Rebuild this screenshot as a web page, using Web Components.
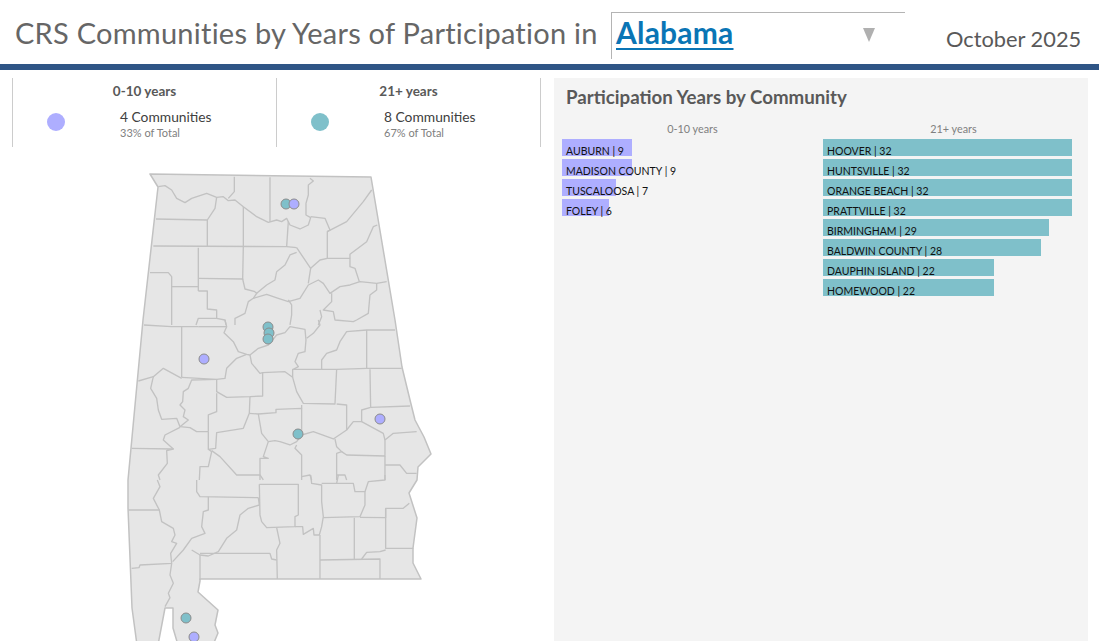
<!DOCTYPE html>
<html>
<head>
<meta charset="utf-8">
<style>
    html, body { margin: 0; height: 100%; overflow: hidden; background: #fff; }
    body { font-family: "Lato", "Liberation Sans", sans-serif; }
</style>
</head>
<body>
<crs-dashboard></crs-dashboard>

<script>
const BLUE = "#aeaeff";
const TEAL = "#7fc0ca";

class CrsHeader extends HTMLElement {
    constructor() {
        super();
        this.attachShadow({mode: "open"});
    }
    connectedCallback() {
        this.shadowRoot.innerHTML = `
        <style>
            :host { display: flex; align-items: flex-start; box-sizing: border-box; border-bottom: 6px solid #2f5586; height: 70px; }
            .title { font-size: 29px; color: #666; margin: 15px 0 0 15px; white-space: nowrap; width: 596px; letter-spacing: 0.25px; }
            .picker { width: 294px; height: 47px; margin-top: 12px; box-sizing: border-box; border-top: 1px solid #b4b4b4; border-left: 1px solid #b4b4b4; display: flex; justify-content: space-between; padding: 1px 30px 0 4px; }
            .state { font-size: 30px; font-weight: 700; color: #0a75b5; text-decoration: underline; text-decoration-thickness: 2px; text-underline-offset: 4px; letter-spacing: 0.2px; }
            .arrow { width: 0; height: 0; margin-top: 14px; border-left: 6.5px solid transparent; border-right: 6.5px solid transparent; border-top: 14px solid #b0b0b0; }
            .date { font-size: 21.8px; color: #595959; margin: 25px 0 0 41px; white-space: nowrap; }
        </style>
        <div class="title">CRS Communities by Years of Participation in</div>
        <div class="picker"><span class="state">Alabama</span><span class="arrow"></span></div>
        <div class="date">October 2025</div>`;
    }
}

class CrsKpi extends HTMLElement {
    constructor() {
        super();
        this.attachShadow({mode: "open"});
    }
    connectedCallback() {
        this.shadowRoot.innerHTML = `
        <style>
            :host { display: block; width: 264px; height: 69px; box-sizing: border-box; border-left: 1px solid #ccc; }
            .head { font-size: 13.5px; font-weight: 700; color: #595959; text-align: center; margin-top: 5px; height: 26px; }
            .row { display: flex; align-items: flex-start; }
            .dot { width: 18px; height: 18px; border-radius: 50%; background: var(--dot); margin: 4px 0 0 34px; }
            .txt { margin-left: 55px; }
            .big { font-size: 13.8px; color: #404040; line-height: 16px; }
            .small { font-size: 11px; color: #808080; line-height: 13px; margin-top: 1px; }
        </style>
        <div class="head">${this.getAttribute("label")}</div>
        <div class="row">
            <span class="dot"></span>
            <div class="txt">
                <div class="big"><slot name="big"></slot></div>
                <div class="small"><slot name="small"></slot></div>
            </div>
        </div>`;
    }
}

class CrsMap extends HTMLElement {
    constructor() {
        super();
        this.attachShadow({mode: "open"});
    }
    connectedCallback() {
        // traced county lines, three blocks in reference crop coordinates
        const north = [
            "115,65 135,62 155,75 170,100 195,113 215,100 260,85 290,97 310,95 325,107 345,105 370,125 410,155 445,172 470,165 485,170 500,160 510,180 540,192 565,180 572,158 558,150 558,115 565,90 565,60 580,48 570,40",
            "343,35 343,80 325,100", "450,37 450,170", "290,97 285,130 262,165 262,245", "108,162 262,165",
            "100,243 500,245 530,248", "370,125 370,245 368,345", "505,170 500,245", "235,248 235,378",
            "235,340 368,342 375,372 405,380", "90,323 145,323 155,335 155,480", "155,365 235,365",
            "235,378 262,378 262,432 290,435 290,460 235,460 228,480", "290,460 315,465 318,480",
            "530,248 572,310 565,355", "530,262 510,270 495,300 470,320 465,345 440,360 410,385",
            "405,380 410,385 400,400 385,410 375,445 345,460 345,480",
            "400,400 440,388 475,400 505,410 540,400 565,360 595,345 610,355 630,385 660,365 690,360 720,350 770,355 800,350",
            "572,310 600,285 622,280 690,280 690,305 705,310 718,350", "622,280 622,200 630,195 615,160 572,155",
            "622,200 680,170 730,110 755,75", "690,280 690,268 740,230 760,185 772,180",
            "505,405 515,420 515,450 510,480", "635,385 635,410 610,435 640,440 645,465 700,470 710,465 745,445 750,390 770,375 770,355",
            "600,435 605,455 595,480"
        ];
        const middle = [
            "72,15 155,20 235,20", "185,20 185,172", "315,0 320,20 312,38 340,65 355,95 380,103 390,105 415,85 445,75 470,45 495,38 510,20 555,28 558,60 555,95 535,100 525,125 535,140 520,148",
            "235,20 320,20", "380,103 350,115 320,145 315,175 290,178", "390,105 395,130 420,160 428,158 495,155 518,172 518,148 650,148 740,145 845,145",
            "428,158 428,228 390,230 320,232 290,215 290,178", "518,172 530,215 550,250 645,252 650,148", "650,252 680,255 680,330",
            "750,148 752,262 870,258", "740,30 740,145", "825,30 740,30 680,35 660,65 650,90 620,100 605,120 605,148",
            "560,55 580,40 600,15 595,0", "185,172 290,178 215,180 205,205 190,215 188,245 180,255 195,270 190,290 205,300 180,320",
            "185,175 130,145 100,170 55,183", "100,170 92,205 110,235 115,270 125,298 170,295 180,320 210,323 230,335 265,335",
            "265,335 265,285 290,275 290,220", "390,230 388,280 370,325 290,338 287,385 265,388 265,335",
            "265,388 275,395 265,440 240,440 238,480", "275,392 300,410 350,465 420,465 430,480",
            "388,280 415,282 425,340 445,365 430,410 445,415 420,415 420,480",
            "445,365 465,362 480,365 510,375 530,365 545,345 580,335 640,357 680,330 700,305 725,305 725,270 752,262",
            "415,282 468,278 468,268 545,265 545,345", "545,255 545,265", "530,375 525,385 545,405 545,480",
            "645,357 650,380 665,395 650,400 650,480", "665,395 680,405 795,408 795,360 820,340 890,335", "725,305 790,340 795,360",
            "795,408 795,480", "795,435 840,435 860,460 890,460", "35,385 160,387 140,392 142,430 115,465 120,480",
            "160,387 130,360 135,345 180,322", "545,470 570,465 575,480", "650,465 675,465 680,480"
        ];
        const south = [
            "25,105 118,105 125,140 160,160 165,180 155,200 170,205 152,235 155,265 60,270 57,278 35,280", "118,105 100,70 120,35 112,15",
            "230,15 230,50 240,65 415,68", "265,65 265,105 250,110 245,155 255,175 215,190 190,225 158,260",
            "415,68 418,90 385,100 360,120 350,165 320,190 295,230 265,243 240,240 215,225", "240,240 240,315",
            "240,235 450,235 455,252 470,255", "418,28 535,28 535,120 525,125 525,155 440,158 425,140 420,120 418,28",
            "470,158 480,205 470,225 472,312", "525,155 548,155 550,178 580,160 582,180 598,180 605,155 610,125 605,80 605,30 575,25 572,0",
            "605,25 650,25 655,0", "650,25 700,25 705,50 735,50 735,90 720,125 610,128", "735,50 745,20 795,15 795,0",
            "720,127 797,128 797,100 850,100 868,85", "797,100 797,220 880,220", "703,128 703,255", "600,180 600,312",
            "600,255 780,252 780,312", "797,225 780,230 740,232 725,252", "155,265 150,300 160,325 145,355 150,368 135,395"
        ];
        const lines = (list) => list.map((p) => `<polyline points="${p}"/>`).join("");
        const pin = (x, y, c) => `<circle cx="${x}" cy="${y}" r="5" fill="${c}"/>`;
        this.shadowRoot.innerHTML = `
        <style>
            :host { display: block; width: 540px; height: 494px; }
            svg { display: block; overflow: hidden; }
            .state { fill: #e6e6e6; stroke: #c2c2c2; stroke-width: 1.5; stroke-linejoin: round; }
            .lines { fill: none; stroke: #c2c2c2; stroke-width: 4; stroke-linejoin: round; }
            circle { stroke: #8c8c8c; stroke-width: 1; }
        </style>
        <svg width="540" height="494" viewBox="0 147 540 494">
            <path class="state" d="M150 174 L371 177 L395 320 L402 367 L410 400 L415 420 L424 437 L431 454 L418 467 L417 480 L409 493 L417 518 L413 548 L413 563 L421 579 L200 579 L200 581 L198 592 L218 610 L215 625 L218 633 L213 645 L178 645 L173 628 L173 608 L165 608 L158 645 L137 645 L132 608 L128 508 L128 480 L143 320 L158 187 Z"/>
            <g class="lines" transform="translate(120 165) scale(.3333)">${lines(north)}</g>
            <g class="lines" transform="translate(120 320) scale(.3333)">${lines(middle)}</g>
            <g class="lines" transform="translate(120 475) scale(.3333)">${lines(south)}</g>
            ${pin(286, 204, TEAL)}${pin(294, 204, BLUE)}
            ${pin(268, 327, TEAL)}${pin(269, 333, TEAL)}${pin(268, 339, TEAL)}
            ${pin(204, 359, BLUE)}${pin(380, 419, BLUE)}${pin(298, 434, TEAL)}
            ${pin(186, 618, TEAL)}${pin(194, 637, BLUE)}
        </svg>`;
    }
}

class CrsBar extends HTMLElement {
    constructor() {
        super();
        this.attachShadow({mode: "open"});
    }
    connectedCallback() {
        const years = Number(this.getAttribute("years"));
        const width = years * 7.78;
        this.shadowRoot.innerHTML = `
        <style>
            :host { display: block; height: 17px; position: relative; }
            .fill { height: 17px; width: ${width}px; background: var(--bar); }
            .label { position: absolute; left: 4px; top: 5px; font-size: 10.5px; line-height: 14px; color: #111; white-space: nowrap; }
        </style>
        <div class="fill"></div>
        <div class="label">${this.getAttribute("name")} | ${years}</div>`;
    }
}

class CrsBarColumn extends HTMLElement {
    constructor() {
        super();
        this.attachShadow({mode: "open"});
    }
    connectedCallback() {
        this.shadowRoot.innerHTML = `
        <style>
            :host { display: block; }
            .head { font-size: 10.8px; color: #808080; text-align: center; height: 17px; line-height: 14px; padding-left: 12px; }
            .rows { display: flex; flex-direction: column; gap: 3px; }
        </style>
        <div class="head">${this.getAttribute("label")}</div>
        <div class="rows"><slot></slot></div>`;
    }
}

class CrsBarPanel extends HTMLElement {
    constructor() {
        super();
        this.attachShadow({mode: "open"});
    }
    connectedCallback() {
        this.shadowRoot.innerHTML = `
        <style>
            :host { display: block; width: 534px; height: 563px; box-sizing: border-box; background: #f4f4f4; padding: 8px 16px 0 8px; }
            h2 { margin: 0 0 14px 4px; font-size: 18.7px; line-height: 22px; font-weight: 700; color: #595959; }
            .cols { display: grid; grid-template-columns: 249px 249px; column-gap: 12px; }
        </style>
        <h2>Participation Years by Community</h2>
        <div class="cols"><slot></slot></div>`;
    }
}

class CrsDashboard extends HTMLElement {
    constructor() {
        super();
        this.attachShadow({mode: "open"});
    }
    connectedCallback() {
        const left = [["AUBURN", 9], ["MADISON COUNTY", 9], ["TUSCALOOSA", 7], ["FOLEY", 6]];
        const right = [["HOOVER", 32], ["HUNTSVILLE", 32], ["ORANGE BEACH", 32], ["PRATTVILLE", 32], ["BIRMINGHAM", 29], ["BALDWIN COUNTY", 28], ["DAUPHIN ISLAND", 22], ["HOMEWOOD", 22]];
        const bars = (list) => list.map((r) => `<crs-bar name="${r[0]}" years="${r[1]}"></crs-bar>`).join("");
        this.shadowRoot.innerHTML = `
        <style>
            :host { display: block; width: 1099px; height: 641px; overflow: hidden; }
            .main { display: flex; padding-top: 8px; }
            .left { width: 554px; flex: none; }
            .kpis { display: flex; padding: 0 0 0 12px; height: 69px; }
            .end { border-left: 1px solid #ccc; height: 69px; }
            .blue { --dot: ${BLUE}; }
            .teal { --dot: ${TEAL}; }
            crs-bar-column.blue { --bar: ${BLUE}; }
            crs-bar-column.teal { --bar: ${TEAL}; }
        </style>
        <crs-header></crs-header>
        <div class="main">
            <div class="left">
                <div class="kpis">
                    <crs-kpi class="blue" label="0-10 years"><span slot="big">4 Communities</span><span slot="small">33% of Total</span></crs-kpi>
                    <crs-kpi class="teal" label="21+ years"><span slot="big">8 Communities</span><span slot="small">67% of Total</span></crs-kpi>
                    <div class="end"></div>
                </div>
                <crs-map></crs-map>
            </div>
            <crs-bar-panel>
                <crs-bar-column class="blue" label="0-10 years">${bars(left)}</crs-bar-column>
                <crs-bar-column class="teal" label="21+ years">${bars(right)}</crs-bar-column>
            </crs-bar-panel>
        </div>`;
    }
}

customElements.define("crs-header", CrsHeader);
customElements.define("crs-kpi", CrsKpi);
customElements.define("crs-map", CrsMap);
customElements.define("crs-bar", CrsBar);
customElements.define("crs-bar-column", CrsBarColumn);
customElements.define("crs-bar-panel", CrsBarPanel);
customElements.define("crs-dashboard", CrsDashboard);
</script>
</body>
</html>
